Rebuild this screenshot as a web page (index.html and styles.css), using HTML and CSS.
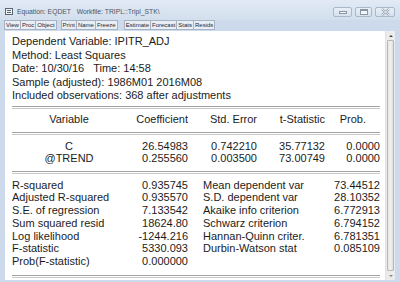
FILE: index.html
```html
<!DOCTYPE html>
<html lang="en">
<head>
  <meta charset="UTF-8" />
  <meta name="viewport" content="width=device-width, initial-scale=1.0"/>
  <title>Equation: EQDET</title>
  <link rel="stylesheet" href="styles.css">
</head>
<body>

  <div class="window">

    <!-- Title bar -->
    <div class="titlebar">
      <span class="sys-icon"><i></i></span>
      <span class="title">Equation: EQDET&nbsp;&nbsp;&nbsp;Workfile: TRIPL::Tripl_STK\</span>
      <div class="caption">
        <span class="cap-btn min"><i class="glyph-min"></i></span>
        <span class="cap-btn max"><i class="glyph-max"></i></span>
        <span class="cap-btn close">
          <svg width="9" height="8" viewBox="0 0 9 8">
            <path d="M1 1 L8 7 M8 1 L1 7" stroke="#8a96a6" stroke-width="2.2" fill="none"/>
            <path d="M1 1 L8 7 M8 1 L1 7" stroke="#f4f7fb" stroke-width="1" fill="none"/>
          </svg>
        </span>
      </div>
    </div>

    <!-- Toolbar -->
    <div class="toolbar">
      <button>View</button>
      <button>Proc</button>
      <button>Object</button>
      <span class="sep"></span>
      <button>Print</button>
      <button>Name</button>
      <button>Freeze</button>
      <span class="sep wide"></span>
      <button>Estimate</button>
      <button>Forecast</button>
      <button>Stats</button>
      <button>Resids</button>
    </div>

    <div class="body">
      <div class="output">
        <div class="info">
          <div>Dependent Variable: IPITR_ADJ</div>
          <div>Method: Least Squares</div>
          <div>Date: 10/30/16&nbsp;&nbsp; Time: 14:58</div>
          <div>Sample (adjusted): 1986M01 2016M08</div>
          <div>Included observations: 368 after adjustments</div>
        </div>

        <div class="rule"></div>

        <div class="coef head">
          <span class="var">Variable</span>
          <span>Coefficient</span>
          <span>Std. Error</span>
          <span>t-Statistic</span>
          <span class="prob-head">Prob.</span>
        </div>

        <div class="rule"></div>

        <div class="coef-rows">
          <div class="coef">
            <span class="var">C</span>
            <span>26.54983</span>
            <span>0.742210</span>
            <span>35.77132</span>
            <span>0.0000</span>
          </div>
          <div class="coef">
            <span class="var">@TREND</span>
            <span>0.255560</span>
            <span>0.003500</span>
            <span>73.00749</span>
            <span>0.0000</span>
          </div>
        </div>

        <div class="rule"></div>

        <div class="stats">
          <span>R-squared</span><span class="num">0.935745</span>
          <span class="rlabel">Mean dependent var</span><span class="num">73.44512</span>

          <span>Adjusted R-squared</span><span class="num">0.935570</span>
          <span class="rlabel">S.D. dependent var</span><span class="num">28.10352</span>

          <span>S.E. of regression</span><span class="num">7.133542</span>
          <span class="rlabel">Akaike info criterion</span><span class="num">6.772913</span>

          <span>Sum squared resid</span><span class="num">18624.80</span>
          <span class="rlabel">Schwarz criterion</span><span class="num">6.794152</span>

          <span>Log likelihood</span><span class="num">-1244.216</span>
          <span class="rlabel">Hannan-Quinn criter.</span><span class="num">6.781351</span>

          <span>F-statistic</span><span class="num">5330.093</span>
          <span class="rlabel">Durbin-Watson stat</span><span class="num">0.085109</span>

          <span>Prob(F-statistic)</span><span class="num">0.000000</span>
          <span></span><span></span>
        </div>

        <div class="rule"></div>
      </div>

      <!-- Vertical scrollbar -->
      <div class="vscroll">
        <span class="arrow up"></span>
        <span class="thumb"></span>
        <span class="arrow down"></span>
      </div>
    </div>

  </div>

</body>
</html>
```

FILE: styles.css
```css
:root {
  --frame: #cddaeb;
  --btn-bg: #e9eef5;
  --btn-border: #a6b3c4;
  --text: #1c1c1c;
  --rule: #a3a3a3;
  --rule-light: #c8c8c8;
}

* {
  box-sizing: border-box;
}

body {
  margin: 0;
  font-family: 'Liberation Sans', Arial, sans-serif;
  color: var(--text);
}

.window {
  width: 400px;
  height: 282px;
  background: var(--frame);
  overflow: hidden;
  display: flex;
  flex-direction: column;
}

/* Title bar */
.titlebar {
  height: 20px;
  display: flex;
  align-items: center;
  padding: 0 5px;
  background: linear-gradient(#e1eaf5, #d3dfee);
}

.sys-icon {
  width: 8px;
  height: 7px;
  border: 1px solid #5b6675;
  background: #f2f4f7;
  display: flex;
  align-items: center;
  justify-content: center;
  margin-top: 3px;
}

.sys-icon i {
  width: 4px;
  height: 3px;
  border-top: 1px solid #5b6675;
  border-bottom: 1px solid #5b6675;
}

.title {
  font-size: 6.8px;
  color: #4a5566;
  margin-left: 4px;
  margin-top: 3px;
  white-space: nowrap;
}

.caption {
  margin-left: auto;
  display: flex;
  gap: 3px;
  margin-top: 3px;
}

.cap-btn {
  height: 10px;
  border: 1px solid #a9b8cb;
  border-radius: 2px;
  background: linear-gradient(#e8eef6, #d6e1ee);
  display: flex;
  align-items: center;
  justify-content: center;
}

.cap-btn.min {
  width: 19px;
}

.cap-btn.max {
  width: 17px;
}

.cap-btn.close {
  width: 20px;
}

.glyph-min {
  width: 8px;
  height: 3px;
  margin-top: 2px;
  border: 1px solid #8a96a6;
  background: #f4f7fb;
}

.glyph-max {
  width: 8px;
  height: 6px;
  border: 1px solid #8a96a6;
  border-top-width: 2px;
  background: #f4f7fb;
}

/* Toolbar */
.toolbar {
  height: 11px;
  display: flex;
  padding-left: 4px;
}

.toolbar button {
  height: 10px;
  margin: 0;
  padding: 0 1px;
  border: 1px solid var(--btn-border);
  background: var(--btn-bg);
  font-family: 'Liberation Sans', Arial, sans-serif;
  font-size: 6px;
  line-height: 7px;
  color: #1f2733;
}

.toolbar button + button {
  border-left: none;
}

.sep {
  width: 4px;
  height: 10px;
}

.sep.wide {
  width: 6px;
}

/* Output area */
.body {
  flex: 1;
  display: flex;
  padding: 0 5px 2px 5px;
}

.output {
  flex: 1;
  background: #fff;
  padding: 4px 5px 0 7px;
  font-size: 11px;
}

.info {
  line-height: 13.5px;
  margin-bottom: 3px;
}

.rule {
  height: 3px;
  border-top: 1px solid var(--rule);
  border-bottom: 1px solid var(--rule-light);
}

.coef {
  display: grid;
  grid-template-columns: 114px 62px 69px 68px 55px;
  line-height: 12.5px;
}

.coef span {
  text-align: right;
  white-space: nowrap;
}

.coef .var {
  text-align: center;
}

.coef .prob-head {
  padding-right: 14px;
}

.head {
  line-height: 13px;
  margin: 4px 0 6px;
}

.coef-rows {
  margin: 5px 0 6px;
}

.stats {
  display: grid;
  grid-template-columns: 118px 58px 15px 117px 60px;
  line-height: 12.8px;
  margin: 5px 0 7px;
}

.stats span {
  white-space: nowrap;
}

.stats .num {
  text-align: right;
}

.stats .rlabel {
  grid-column: 4;
}

/* Scrollbar */
.vscroll {
  width: 10px;
  background: #ececec;
  border-left: 1px solid #e2e2e2;
  display: flex;
  flex-direction: column;
}

.arrow {
  height: 9px;
  display: flex;
  align-items: center;
  justify-content: center;
}

.arrow::before {
  content: '';
  border-left: 2px solid transparent;
  border-right: 2px solid transparent;
}

.arrow.up::before {
  border-bottom: 2px solid #444;
}

.arrow.down::before {
  border-top: 2px solid #888;
}

.thumb {
  flex: 1;
  margin: 0 1px;
  border: 1px solid #b8b8b8;
  border-radius: 1px;
  background: linear-gradient(90deg, #e6e6e6, #f2f2f2 50%, #dcdcdc);
}
```
